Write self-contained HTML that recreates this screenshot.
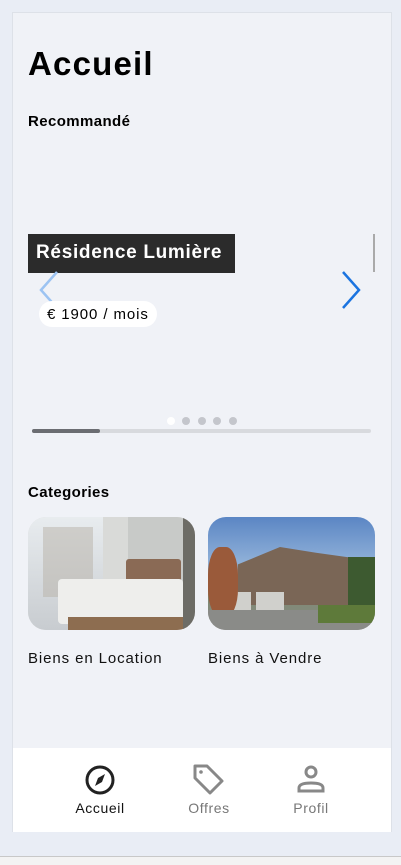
<!DOCTYPE html>
<html><head><meta charset="utf-8"><style>
*{margin:0;padding:0;box-sizing:border-box}
body{width:401px;height:865px;background:#e9edf5;font-family:"Liberation Sans",sans-serif;position:relative;overflow:hidden}
.card{position:absolute;left:12px;top:12px;width:380px;height:820px;background:#f0f2f7;border:1px solid #dde1e8}
.abs{position:absolute}
h1{position:absolute;left:15px;top:32px;font-size:33px;font-weight:bold;color:#000;letter-spacing:1.2px}
.sec{position:absolute;left:15px;font-size:15px;font-weight:bold;color:#000;letter-spacing:0.4px}
.title{position:absolute;left:15px;top:221px;background:#2b2b2b;color:#fff;font-size:19px;font-weight:bold;padding:8px 8px 8px 8px;width:207px;height:39px;white-space:nowrap;letter-spacing:0.7px}
.price{position:absolute;left:26px;top:288px;background:#fff;border-radius:14px;padding:5px 8px;font-size:15px;color:#000;height:26px;letter-spacing:0.9px;font-weight:500}
.nav{position:absolute;left:0;top:735px;width:378px;height:84px;background:#fff}
.lab{position:absolute;top:52px;font-size:14px;width:80px;text-align:center;letter-spacing:0.6px}
.img{position:absolute;top:504px;height:113px;border-radius:18px;overflow:hidden}
.cap{position:absolute;top:637px;font-size:15px;color:#111;letter-spacing:0.9px}
</style></head><body>
<div class="card">
<h1>Accueil</h1>
<div class="sec" style="top:100px">Recommandé</div>
<div class="abs" style="left:360px;top:221px;width:2px;height:38px;background:#aaa"></div>
<div class="title">Résidence Lumière</div>
<svg class="abs" style="left:24px;top:256px" width="26" height="44"><path d="M20 3 L4 21 L20 39" fill="none" stroke="#9cc3f2" stroke-width="2.5"/></svg>
<svg class="abs" style="left:326px;top:256px" width="26" height="44"><path d="M4 3 L20 21 L4 39" fill="none" stroke="#1b74e0" stroke-width="2.5"/></svg>
<div class="price">€ 1900 / mois</div>
<div class="abs" style="left:154px;top:404px;width:8px;height:8px;border-radius:50%;background:#fff"></div>
<div class="abs" style="left:169px;top:404px;width:8px;height:8px;border-radius:50%;background:#c4c6cc"></div>
<div class="abs" style="left:185px;top:404px;width:8px;height:8px;border-radius:50%;background:#c4c6cc"></div>
<div class="abs" style="left:200px;top:404px;width:8px;height:8px;border-radius:50%;background:#c4c6cc"></div>
<div class="abs" style="left:216px;top:404px;width:8px;height:8px;border-radius:50%;background:#c4c6cc"></div>
<div class="abs" style="left:19px;top:416px;width:339px;height:4px;border-radius:2px;background:#d8dade"></div>
<div class="abs" style="left:19px;top:416px;width:68px;height:4px;border-radius:2px;background:#6b6d72"></div>
<div class="sec" style="top:471px">Categories</div>
<div class="img" style="left:15px;width:167px;background:#d9dad8">
 <div class="abs" style="left:0;top:0;width:75px;height:113px;background:linear-gradient(#e8ecef,#c8ccd0)"></div>
 <div class="abs" style="left:15px;top:10px;width:50px;height:70px;background:#b8b2a8;opacity:.5"></div>
 <div class="abs" style="left:100px;top:0;width:60px;height:113px;background:#c8cac8"></div>
 <div class="abs" style="left:98px;top:42px;width:55px;height:30px;background:#8a6a55;border-radius:3px"></div>
 <div class="abs" style="left:30px;top:62px;width:125px;height:45px;background:#eeeeec;border-radius:4px"></div>
 <div class="abs" style="left:40px;top:100px;width:120px;height:13px;background:#8d6d50"></div>
 <div class="abs" style="left:155px;top:0;width:12px;height:113px;background:#6d6c66"></div>
</div>
<div class="img" style="left:195px;width:167px;background:linear-gradient(#5b86c4 0,#8fb0d8 40%,#7a8a70 60%,#8a8a82 100%)">
 <div class="abs" style="left:30px;top:30px;width:120px;height:58px;background:#7a6656;clip-path:polygon(0 30%,35% 0,65% 10%,100% 20%,100% 100%,0 100%)"></div>
 <div class="abs" style="left:15px;top:75px;width:28px;height:18px;background:#d0d0cc"></div>
 <div class="abs" style="left:48px;top:75px;width:28px;height:18px;background:#d0d0cc"></div>
 <div class="abs" style="left:0;top:30px;width:30px;height:70px;background:#9a5a3a;border-radius:40%"></div>
 <div class="abs" style="left:140px;top:40px;width:27px;height:55px;background:#3d5a30"></div>
 <div class="abs" style="left:0;top:93px;width:167px;height:20px;background:#8a8b88"></div>
 <div class="abs" style="left:110px;top:88px;width:57px;height:18px;background:#5e7a3a"></div>
</div>
<div class="cap" style="left:15px">Biens en Location</div>
<div class="cap" style="left:195px">Biens à Vendre</div>
<div class="nav">
 <svg class="abs" style="left:71px;top:16px" width="32" height="32" viewBox="0 0 32 32"><circle cx="16" cy="16" r="13" fill="none" stroke="#222" stroke-width="3"/><path d="M21 10 L18 18 L11 22 L14 14 Z" fill="#222"/></svg>
 <div class="lab" style="left:47px;color:#111">Accueil</div>
 <svg class="abs" style="left:178px;top:14px" width="36" height="36" viewBox="0 0 36 36"><path d="M4 4 H16 L31 19 L19 31 L4 16 Z" fill="none" stroke="#888" stroke-width="3" stroke-linejoin="round"/><circle cx="10" cy="10" r="1.8" fill="#888"/></svg>
 <div class="lab" style="left:156px;color:#777">Offres</div>
 <svg class="abs" style="left:284px;top:16px" width="28" height="32" viewBox="0 0 28 32"><circle cx="14" cy="8" r="5" fill="none" stroke="#888" stroke-width="3"/><path d="M2 24 Q2 19 14 19 Q26 19 26 24 V27 H2 Z" fill="none" stroke="#888" stroke-width="3"/></svg>
 <div class="lab" style="left:258px;color:#777">Profil</div>
</div>
</div>
<div class="abs" style="left:0;top:856px;width:401px;height:9px;background:#f3f3f3;border-top:1px solid #c8c8c8"></div>
</body></html>
